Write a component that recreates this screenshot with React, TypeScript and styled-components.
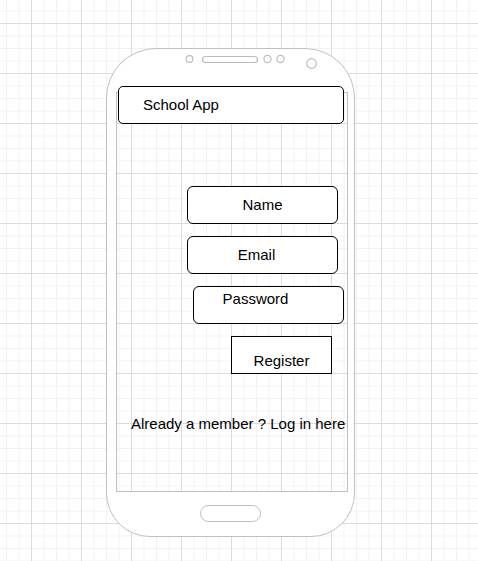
import * as React from 'react';
import styled, { createGlobalStyle } from 'styled-components';

const gridBackground = `
  background-color: #ffffff;
  background-image:
    linear-gradient(to right, #dcdcdc 1px, transparent 1px),
    linear-gradient(to bottom, #dcdcdc 1px, transparent 1px),
    linear-gradient(to right, #f2f2f2 1px, transparent 1px),
    linear-gradient(to bottom, #f2f2f2 1px, transparent 1px);
  background-size: 50px 50px, 50px 50px, 12.5px 12.5px, 12.5px 12.5px;
  background-position: 31px 23px, 31px 23px, 6px 10.5px, 6px 10.5px;
  background-attachment: fixed;
`;

const GlobalStyle = createGlobalStyle`
  html, body {
    margin: 0;
    padding: 0;
  }
  body {
    font-family: "Liberation Sans", Arial, sans-serif;
    color: #000;
  }
`;

const Canvas = styled.div`
  ${gridBackground}
  width: 478px;
  height: 561px;
  box-sizing: border-box;
  padding: 48px 0 0 106px;
  overflow: hidden;
`;

const Phone = styled.div`
  width: 249px;
  height: 489px;
  box-sizing: border-box;
  border: 1px solid #bfbfbf;
  border-radius: 50px 50px 44px 44px;
  background: #ffffff;
  display: flex;
  flex-direction: column;
`;

const Earpiece = styled.svg`
  display: block;
  flex: none;
`;

const Screen = styled.div`
  ${gridBackground}
  width: 232px;
  height: 400px;
  box-sizing: border-box;
  margin-left: 9px;
  border: 1px solid #bfbfbf;
  display: flex;
  flex-direction: column;
  align-items: flex-start;
`;

const Header = styled.div`
  width: 226px;
  height: 38px;
  box-sizing: border-box;
  margin: -7px 0 0 1px;
  padding: 0 0 1px 24px;
  border: 1px solid #000;
  border-radius: 5px;
  background: #fff;
  display: flex;
  align-items: center;
  font-size: 15px;
  white-space: nowrap;
`;

const Field = styled.div<{ $top: number; $left: number; $dx?: number; $dy?: number; $square?: boolean; $w?: number }>`
  width: ${({ $w }) => $w ?? 151}px;
  height: 38px;
  box-sizing: border-box;
  margin: ${({ $top, $left }) => `${$top}px 0 0 ${$left}px`};
  border: 1px solid #000;
  border-radius: ${({ $square }) => ($square ? '0' : '6px')};
  background: #fff;
  display: flex;
  align-items: center;
  justify-content: center;
  font-size: 15px;
  white-space: nowrap;

  span {
    position: relative;
    left: ${({ $dx }) => $dx ?? 0}px;
    top: ${({ $dy }) => ($dy ?? 0) - 1}px;
  }
`;

const LoginLink = styled.div`
  margin: 41px 0 0 14px;
  font-size: 15px;
  line-height: 18px;
  white-space: nowrap;
`;

const HomeButton = styled.div`
  width: 61px;
  height: 17px;
  box-sizing: border-box;
  margin-top: 13px;
  align-self: center;
  border: 1px solid #bfbfbf;
  border-radius: 9px;
`;

export default function App() {
  return (
    <>
      <GlobalStyle />
      <Canvas>
        <Phone>
          <Earpiece width="247" height="43" viewBox="0 0 247 43">
            <g fill="none" stroke="#bdbdbd" strokeWidth="1.2">
              <circle cx="82.5" cy="10" r="3.4" />
              <rect x="95.5" y="7.5" width="55" height="6" rx="3" />
              <circle cx="160.5" cy="10" r="3.6" />
              <circle cx="173.5" cy="10" r="3.6" />
              <circle cx="204.5" cy="14.5" r="4.8" />
            </g>
          </Earpiece>
          <Screen>
            <Header>School App</Header>
            <Field $top={62} $left={70}>
              <span>Name</span>
            </Field>
            <Field $top={12} $left={70} $dx={-6}>
              <span>Email</span>
            </Field>
            <Field $top={12} $left={76} $dx={-13} $dy={-6}>
              <span>Password</span>
            </Field>
            <Field $top={12} $left={114} $w={101} $square $dy={6}>
              <span>Register</span>
            </Field>
            <LoginLink>Already a member ? Log in here</LoginLink>
          </Screen>
          <HomeButton />
        </Phone>
      </Canvas>
    </>
  );
}
